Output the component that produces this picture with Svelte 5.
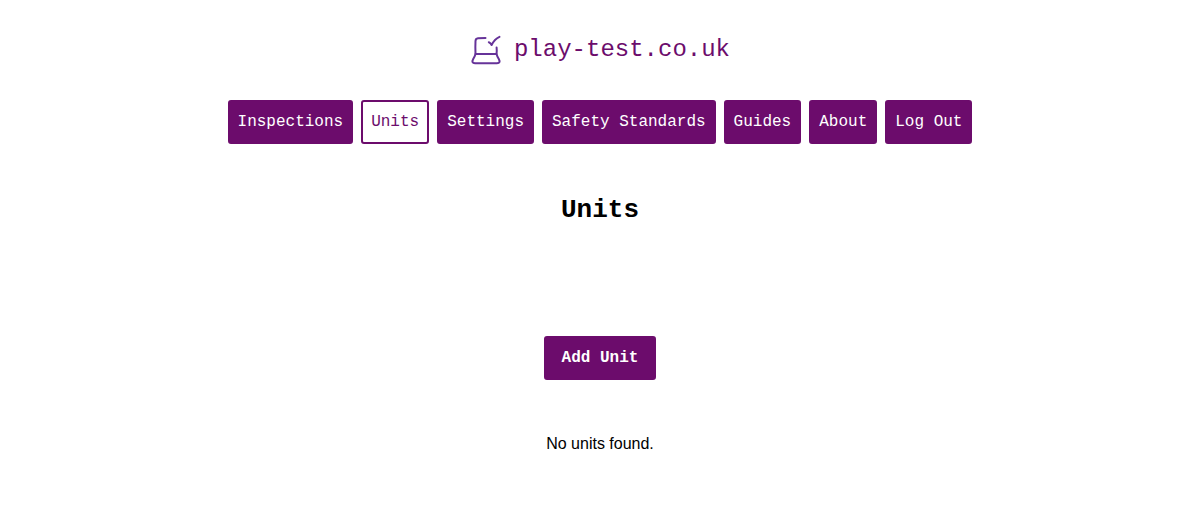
<script>
  const links = ['Inspections', 'Units', 'Settings', 'Safety Standards', 'Guides', 'About'];
  const current = 'Units';
</script>

<header>
  <a class="brand" href="/">
    <svg viewBox="0 0 32 32" width="32" height="32" fill="none" stroke="#663399" stroke-width="2" stroke-linecap="round" stroke-linejoin="round" aria-hidden="true">
      <path d="M15.500 4Q11 4 8 4.300Q5.600 4.600 5.500 7Q5.200 13 5.500 20H26.500Q27 17 26.600 13.500" />
      <path d="M5.500 20Q5 22 3.200 25Q1 29.200 5 29.200H27Q31 29.200 28.800 25Q27 22 26.500 20" />
      <path d="M18.800 8.200Q20.500 8.800 21.600 11Q24.500 5 29.500 2.800" />
    </svg>
    <span>play-test.co.uk</span>
  </a>
</header>

<nav>
  {#each links as link}
    <a href="/{link.toLowerCase().replace(' ', '_')}" class:current={link === current} aria-current={link === current ? 'page' : undefined}>{link}</a>
  {/each}
  <button type="button">Log Out</button>
</nav>

<main>
  <h1>Units</h1>
  <a class="add" href="/units/new">Add Unit</a>
  <p>No units found.</p>
</main>

<style>
  :global(body) {
    background: #fff;
    color: #000;
    font-family: "Liberation Sans", Arial, sans-serif;
    font-size: 16px;
    line-height: 24px;
  }
  header {
    display: flex;
    justify-content: center;
    padding: 32px 16px;
  }
  .brand {
    display: flex;
    align-items: center;
    gap: 12px;
    color: #6c0c6c;
    font: 24px/36px "Liberation Mono", monospace;
    text-decoration: none;
  }
  nav {
    display: flex;
    flex-wrap: wrap;
    justify-content: center;
    gap: 8px;
    padding: 0 16px;
  }
  nav a, nav button, .add {
    box-sizing: border-box;
    height: 44px;
    padding: 8px;
    border: 2px solid #6c0c6c;
    border-radius: 3px;
    background: #6c0c6c;
    color: #fff;
    font: 16px/24px "Liberation Mono", monospace;
    text-decoration: none;
  }
  nav button { cursor: pointer; }
  nav a.current {
    background: #fff;
    color: #6c0c6c;
  }
  main {
    display: flex;
    flex-direction: column;
    align-items: center;
    padding: 48px 16px;
  }
  h1 {
    margin: 0 0 108px;
    font: bold 26px/36px "Liberation Mono", monospace;
  }
  .add {
    padding: 8px 16px;
    font-weight: bold;
  }
  p { margin: 52px 0 0; }
</style>
